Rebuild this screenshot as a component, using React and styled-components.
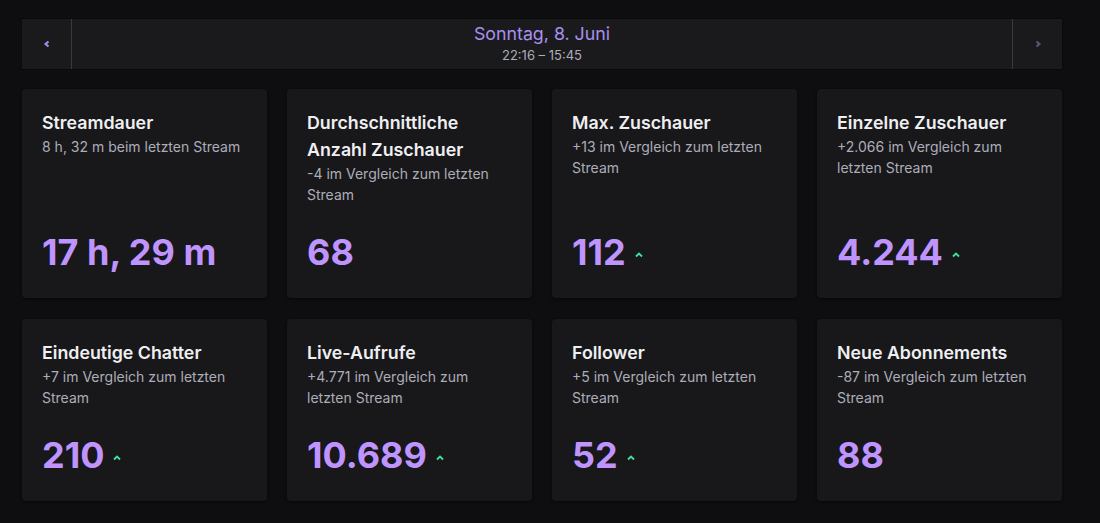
import React from 'react';
import styled, { createGlobalStyle } from 'styled-components';

const GlobalStyle = createGlobalStyle`
  html, body {
    margin: 0;
    padding: 0;
    background: #0e0e10;
  }
  body {
    font-family: Inter, "Noto Sans", sans-serif;
    color: #efeff1;
  }
`;

const Page = styled.div`
  width: 1100px;
  height: 523px;
  box-sizing: border-box;
  padding: 19px 38px 0 22px;
  display: flex;
  flex-direction: column;
  gap: 20px;
`;

const DateBar = styled.div`
  display: flex;
  height: 50px;
  background: #1a1a1d;
  box-shadow: 0 0 0 1px #0a0a0b;
`;

const NavButton = styled.button`
  width: 50px;
  flex: none;
  border: 0;
  padding: 0;
  background: transparent;
  display: flex;
  align-items: center;
  justify-content: center;
  color: ${p => (p.disabled ? '#5c5874' : '#a68ff0')};
  ${p => (p.side === 'left' ? 'border-right' : 'border-left')}: 1px solid #3a3a3d;
  cursor: ${p => (p.disabled ? 'default' : 'pointer')};
`;

const DateInfo = styled.div`
  flex: 1;
  display: flex;
  flex-direction: column;
  align-items: center;
  padding-top: 3px;
`;

const DateTitle = styled.div`
  font-size: 17.8px;
  line-height: 24px;
  color: #a990f0;
`;

const DateRange = styled.div`
  font-size: 13px;
  line-height: 18px;
  color: #adadb8;
`;

const Grid = styled.div`
  display: grid;
  grid-template-columns: repeat(4, 245px);
  gap: 21px 20px;
`;

const Card = styled.div`
  background: #18181b;
  border-radius: 4px;
  box-shadow: 0 1px 3px rgba(0, 0, 0, 0.6);
  padding: 20px 20px 26px;
  display: flex;
  flex-direction: column;
`;

const Title = styled.div`
  font-size: 17.8px;
  font-weight: 600;
  line-height: 27px;
  color: #efeff1;
`;

const Subtitle = styled.div`
  font-size: 14px;
  line-height: 21px;
  color: #adadb8;
`;

const ValueRow = styled.div`
  margin-top: auto;
  padding-top: 27px;
  display: flex;
  align-items: center;
  gap: 9px;
`;

const Value = styled.div`
  font-size: 36px;
  font-weight: 700;
  line-height: 40px;
  color: #bf94ff;
`;

const Trend = styled.span`
  display: flex;
  margin-top: 6px;
  color: #3fe39a;
`;

const Chevron = ({ dir }) => (
  <svg width="8" height="8" viewBox="0 0 8 8" fill="none">
    <path
      d={dir === 'left' ? 'M5.5 1.5 L2.5 4 L5.5 6.5' : 'M2.5 1.5 L5.5 4 L2.5 6.5'}
      stroke="currentColor"
      strokeWidth="2"
    />
  </svg>
);

const UpCaret = () => (
  <svg width="8" height="6" viewBox="0 0 8 6" fill="none">
    <path d="M1 4.5 L4 1.5 L7 4.5" stroke="currentColor" strokeWidth="1.8" />
  </svg>
);

const stats = [
  { title: 'Streamdauer', sub: '8 h, 32 m beim letzten Stream', value: '17 h, 29 m' },
  { title: 'Durchschnittliche Anzahl Zuschauer', sub: '-4 im Vergleich zum letzten Stream', value: '68' },
  { title: 'Max. Zuschauer', sub: '+13 im Vergleich zum letzten Stream', value: '112', up: true },
  { title: 'Einzelne Zuschauer', sub: '+2.066 im Vergleich zum letzten Stream', value: '4.244', up: true },
  { title: 'Eindeutige Chatter', sub: '+7 im Vergleich zum letzten Stream', value: '210', up: true },
  { title: 'Live-Aufrufe', sub: '+4.771 im Vergleich zum letzten Stream', value: '10.689', up: true },
  { title: 'Follower', sub: '+5 im Vergleich zum letzten Stream', value: '52', up: true },
  { title: 'Neue Abonnements', sub: '-87 im Vergleich zum letzten Stream', value: '88' },
];

export default function App() {
  return (
    <>
      <GlobalStyle />
      <Page>
        <DateBar>
          <NavButton side="left" aria-label="Vorheriger Stream">
            <Chevron dir="left" />
          </NavButton>
          <DateInfo>
            <DateTitle>Sonntag, 8. Juni</DateTitle>
            <DateRange>22:16 – 15:45</DateRange>
          </DateInfo>
          <NavButton side="right" disabled aria-label="Nächster Stream">
            <Chevron dir="right" />
          </NavButton>
        </DateBar>
        <Grid>
          {stats.map(s => (
            <Card key={s.title}>
              <Title>{s.title}</Title>
              <Subtitle>{s.sub}</Subtitle>
              <ValueRow>
                <Value>{s.value}</Value>
                {s.up && (
                  <Trend>
                    <UpCaret />
                  </Trend>
                )}
              </ValueRow>
            </Card>
          ))}
        </Grid>
      </Page>
    </>
  );
}
